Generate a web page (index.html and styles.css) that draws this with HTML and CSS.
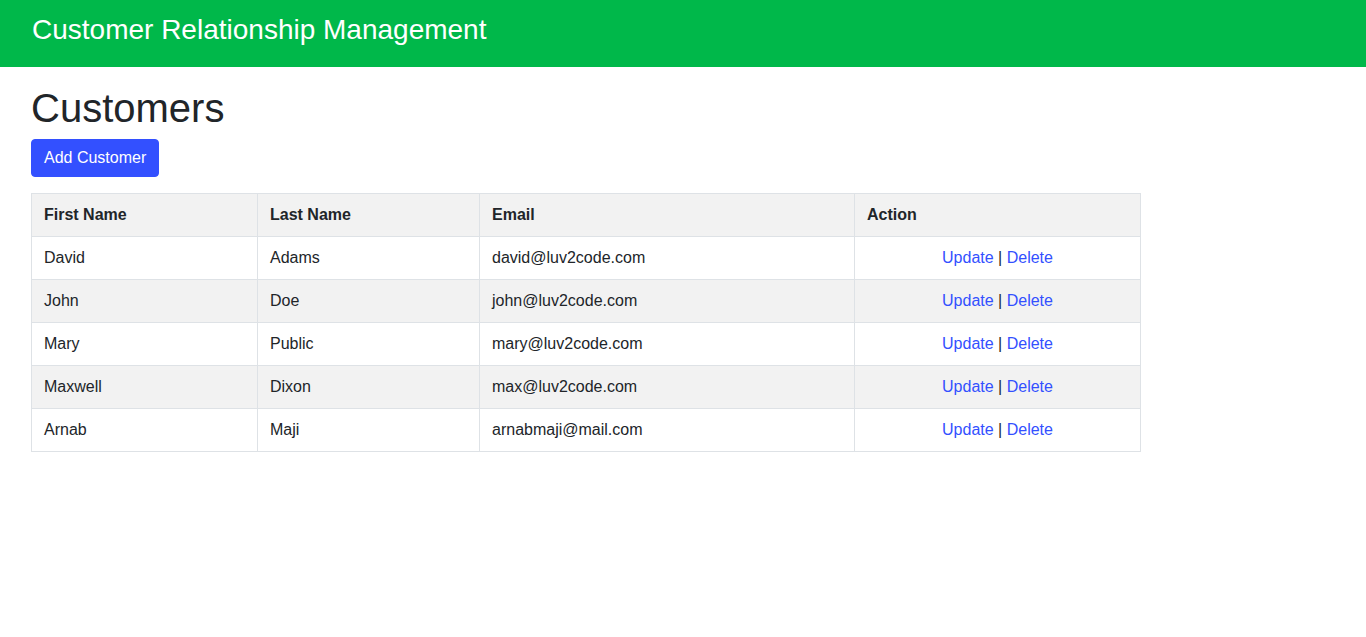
FILE: index.html
```html
<!DOCTYPE html>
<html>
<head>
<meta charset="utf-8">
<title>Customers</title>
<link rel="stylesheet" href="styles.css">
</head>
<body>
<header class="topbar">
  <h2 class="brand">Customer Relationship Management</h2>
</header>
<main class="content">
  <h1 class="page-title">Customers</h1>
  <button class="btn-add" type="button">Add Customer</button>
  <table class="customers">
    <colgroup>
      <col class="c1"><col class="c2"><col class="c3"><col class="c4">
    </colgroup>
    <thead>
      <tr><th>First Name</th><th>Last Name</th><th>Email</th><th>Action</th></tr>
    </thead>
    <tbody>
      <tr><td>David</td><td>Adams</td><td>david@luv2code.com</td><td class="act"><a href="#">Update</a> | <a href="#">Delete</a></td></tr>
      <tr><td>John</td><td>Doe</td><td>john@luv2code.com</td><td class="act"><a href="#">Update</a> | <a href="#">Delete</a></td></tr>
      <tr><td>Mary</td><td>Public</td><td>mary@luv2code.com</td><td class="act"><a href="#">Update</a> | <a href="#">Delete</a></td></tr>
      <tr><td>Maxwell</td><td>Dixon</td><td>max@luv2code.com</td><td class="act"><a href="#">Update</a> | <a href="#">Delete</a></td></tr>
      <tr><td>Arnab</td><td>Maji</td><td>arnabmaji@mail.com</td><td class="act"><a href="#">Update</a> | <a href="#">Delete</a></td></tr>
    </tbody>
  </table>
</main>
</body>
</html>
```

FILE: styles.css
```css
* { box-sizing: border-box; }
html, body { margin: 0; padding: 0; }
body {
  font-family: "Liberation Sans", Arial, sans-serif;
  font-size: 16px;
  line-height: 1.5;
  color: #212529;
  background: #fff;
}
.topbar {
  background: #00b84a;
  height: 67px;
  padding: 11px 32px 0;
}
.brand {
  margin: 0;
  font-weight: 400;
  font-size: 28px;
  line-height: 38px;
  color: #fff;
}
.content {
  padding: 0 31px;
}
.page-title {
  margin: 0;
  padding-top: 17px;
  font-size: 40px;
  font-weight: 400;
  line-height: 48px;
  margin-bottom: 7px;
}
.btn-add {
  display: block;
  font-family: inherit;
  font-size: 16px;
  line-height: 24px;
  padding: 6px 12px;
  color: #fff;
  background: #3350ff;
  border: 1px solid #3350ff;
  border-radius: 4px;
  cursor: pointer;
}
.customers {
  margin-top: 16px;
  width: 1109px;
  border-collapse: collapse;
  table-layout: fixed;
}
.c1 { width: 226px; }
.c2 { width: 222px; }
.c3 { width: 375px; }
.c4 { width: 286px; }
.customers th,
.customers td {
  border: 1px solid #dee2e6;
  padding: 9px 12px;
  height: 43px;
  text-align: left;
  vertical-align: middle;
}
.customers th { font-weight: 700; }
.customers thead tr,
.customers tbody tr:nth-child(even) {
  background: #f2f2f2;
}
.customers td.act { text-align: center; }
.customers a {
  color: #3350ff;
  text-decoration: none;
}
```
